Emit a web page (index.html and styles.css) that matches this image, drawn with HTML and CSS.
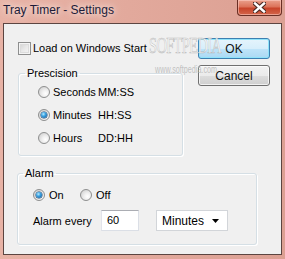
FILE: index.html
```html
<!DOCTYPE html>
<html>
<head>
<meta charset="utf-8">
<link rel="stylesheet" href="styles.css">
</head>
<body>
<div class="window">
  <div class="titlebar">
    <span class="title">Tray Timer - Settings</span>
    <div class="close">
      <svg width="13" height="11" viewBox="0 0 13 11">
        <path d="M2 1.5 L11 9.5 M11 1.5 L2 9.5" stroke="#4a2a24" stroke-width="4.6" stroke-linecap="square"/>
        <path d="M2 1.5 L11 9.5 M11 1.5 L2 9.5" stroke="#ffffff" stroke-width="2.4" stroke-linecap="square"/>
      </svg>
    </div>
  </div>
  <div class="client">
    <div class="left">
      <div class="check-row"><span class="checkbox"></span><span>Load on Windows Start</span></div>
      <fieldset class="group prec">
        <legend>Prescision</legend>
        <div class="radio-row"><span class="radio"></span><span class="word">Seconds</span><span>MM:SS</span></div>
        <div class="radio-row"><span class="radio on"></span><span class="word">Minutes</span><span>HH:SS</span></div>
        <div class="radio-row"><span class="radio"></span><span class="word">Hours</span><span>DD:HH</span></div>
      </fieldset>
    </div>
    <div class="buttons">
      <div class="btn default">OK</div>
      <div class="btn">Cancel</div>
    </div>
    <fieldset class="group alarm">
      <legend>Alarm</legend>
      <div class="alarm-row">
        <div class="radio-item first"><span class="radio on"></span><span>On</span></div>
        <div class="radio-item"><span class="radio"></span><span>Off</span></div>
      </div>
      <div class="alarm-row">
        <span class="every">Alarm every</span>
        <div class="textbox">60</div>
        <div class="select"><span>Minutes</span>
          <svg width="8" height="5" viewBox="0 0 8 5"><path d="M0 0 H7 L3.5 4 Z" fill="#000"/></svg>
        </div>
      </div>
    </fieldset>
    <div class="watermark"><div class="wm-big">SOFTPEDIA</div><div class="wm-small">www.softpedia.com</div></div>
  </div>
</div>
</body>
</html>
```

FILE: styles.css
```css
html, body {
  margin: 0;
  padding: 0;
}
body {
  width: 285px;
  height: 259px;
  overflow: hidden;
  font-family: "Liberation Sans", Arial, sans-serif;
  font-size: 11px;
  color: #000;
}
.window {
  box-sizing: border-box;
  width: 285px;
  height: 259px;
  padding: 0 3px 4px 3px;
  display: flex;
  flex-direction: column;
  background: linear-gradient(to right, #e8b3a6 0%, #e2a99c 45%, #dca093 100%);
}
.titlebar {
  height: 23px;
  display: flex;
  justify-content: space-between;
  align-items: flex-start;
  flex: none;
}
.title {
  font-size: 12px;
  line-height: 14px;
  padding-top: 3px;
  color: #1b1b38;
  text-shadow: 0 0 6px rgba(255, 240, 236, 0.95), 0 0 10px rgba(255, 240, 236, 0.8);
}
.close {
  width: 45px;
  height: 16px;
  box-sizing: border-box;
  margin-left: auto;
  border: 1px solid #6a2f25;
  border-top: none;
  border-radius: 0 0 4px 4px;
  background: linear-gradient(to bottom, #eaa08c 0%, #dc735a 45%, #c8442a 55%, #d3664b 100%);
  box-shadow: inset 0 0 0 1px rgba(255, 210, 200, 0.55);
  display: flex;
  align-items: center;
  justify-content: center;
}
.client {
  position: relative;
  flex: 1;
  box-sizing: border-box;
  border: 1px solid #5c4541;
  background: #f0f0f0;
  padding: 14px 0 0 14px;
  display: grid;
  grid-template-columns: 165px 72px;
  column-gap: 15px;
  align-content: start;
  align-items: start;
}
.left {
  padding-top: 4px;
}
.check-row {
  display: flex;
  align-items: center;
  gap: 2px;
  height: 13px;
  line-height: 13px;
}
.checkbox {
  width: 13px;
  height: 13px;
  box-sizing: border-box;
  border: 1px solid #8e8f8f;
  background: linear-gradient(135deg, #cfcfcf 0%, #e8e8e8 50%, #f8f8f8 100%);
  box-shadow: inset 0 0 0 1px #f4f4f4, inset 0 0 0 2px #dcdcdc;
  flex: none;
}
.group {
  margin: 0;
  padding: 0;
  border: 1px solid #d5dfe5;
  border-radius: 3px;
  box-shadow: 1px 1px 0 #ffffff, inset 1px 1px 0 #ffffff;
  min-width: 0;
}
.group legend {
  padding: 0 2px;
  line-height: 14px;
  height: 14px;
}
.prec {
  margin-top: 11px;
  padding: 4px 0 9px 19px;
  display: flex;
  flex-direction: column;
  gap: 7px;
}
.prec legend {
  margin-left: -13px;
}
.radio-row {
  display: flex;
  align-items: center;
  height: 16px;
}
.radio-row .radio {
  margin-right: 3px;
}
.word {
  width: 45px;
}
.radio {
  position: relative;
  width: 12px;
  height: 12px;
  box-sizing: border-box;
  border-radius: 50%;
  border: 1px solid #8e8f8f;
  background: radial-gradient(circle at 65% 65%, #ffffff 0%, #f0f0f0 35%, #c8c8c8 100%);
  flex: none;
}
.radio.on::after {
  content: "";
  position: absolute;
  left: 2px;
  top: 2px;
  width: 6px;
  height: 6px;
  border-radius: 50%;
  background: radial-gradient(circle at 40% 35%, #b6ecff 0%, #3aa0e0 40%, #0d4f8b 100%);
  box-shadow: 0 0 0 0.5px #1d3f66;
}
.buttons {
  display: flex;
  flex-direction: column;
  gap: 6px;
}
.btn {
  height: 21px;
  box-sizing: border-box;
  border: 1px solid #707070;
  border-radius: 3px;
  background: linear-gradient(to bottom, #f2f2f2 0%, #ebebeb 50%, #dddddd 51%, #cfcfcf 100%);
  box-shadow: inset 0 0 0 1px rgba(255, 255, 255, 0.7);
  display: flex;
  align-items: center;
  justify-content: center;
  font-size: 12px;
  color: #111;
}
.btn.default {
  border-color: #3c7fb1;
  background: linear-gradient(to bottom, #e5f4fc 0%, #d7eefb 50%, #bfe4f9 51%, #abd9f4 100%);
  box-shadow: inset 0 0 0 1px #8fe3fa;
}
.alarm {
  grid-column: 1 / -1;
  justify-self: start;
  width: 240px;
  box-sizing: border-box;
  margin: 10px 0 0 -1px;
  padding: 7px 0 13px 15px;
  display: flex;
  flex-direction: column;
  gap: 7px;
}
.alarm legend {
  margin-left: -10px;
}
.alarm-row {
  display: flex;
  align-items: center;
}
.radio-item {
  display: flex;
  align-items: center;
  gap: 4px;
  height: 16px;
}
.radio-item.first {
  width: 47px;
}
.every {
  width: 68px;
}
.textbox {
  width: 38px;
  height: 21px;
  box-sizing: border-box;
  border: 1px solid #dbdfe6;
  border-top-color: #abadb3;
  border-left-color: #e2e3ea;
  background: #fff;
  padding-left: 5px;
  line-height: 19px;
}
.select {
  margin-left: 17px;
  width: 72px;
  height: 21px;
  box-sizing: border-box;
  border: 1px solid #d2d5d9;
  background: #fff;
  display: flex;
  align-items: center;
  justify-content: space-between;
  padding: 0 7px 0 5px;
  font-size: 12px;
}
.select svg {
  margin-top: 1px;
}
.watermark {
  position: absolute;
  left: 145px;
  top: 9px;
  pointer-events: none;
}
.wm-big {
  font-family: "Liberation Serif", serif;
  font-size: 24px;
  line-height: 24px;
  letter-spacing: -1px;
  color: rgba(252, 252, 252, 0.85);
  -webkit-text-stroke: 0.7px rgba(170, 170, 170, 0.7);
  transform: scaleX(0.6);
  transform-origin: left top;
  width: max-content;
}
.wm-small {
  margin-top: 7px;
  margin-left: 6px;
  font-size: 10px;
  color: rgba(180, 180, 180, 0.8);
  transform: scaleX(0.72);
  transform-origin: left top;
  width: max-content;
}
```
